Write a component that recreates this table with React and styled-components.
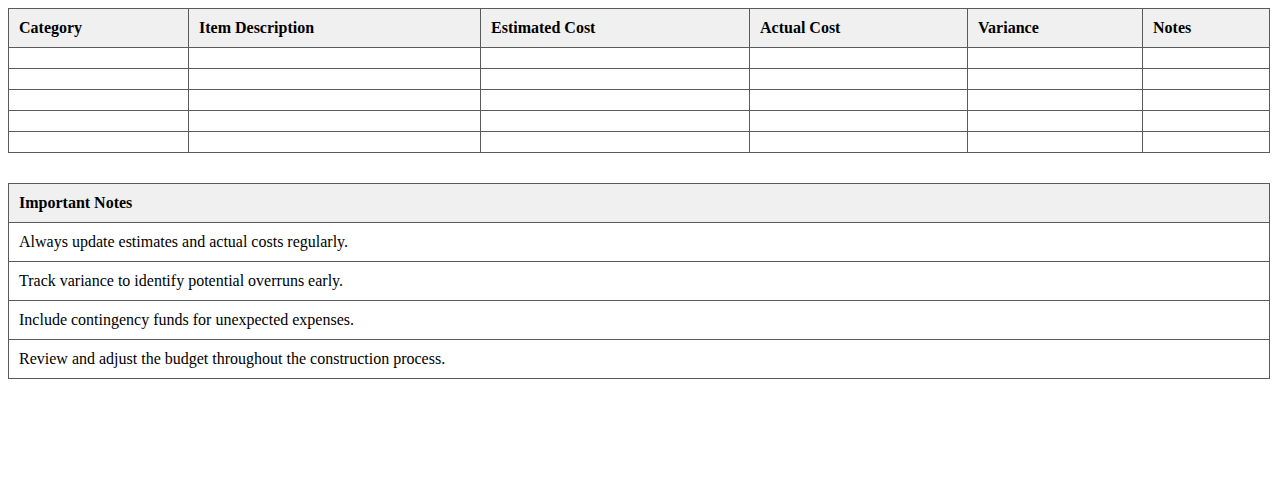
import * as React from "react"
import styled, { createGlobalStyle } from "styled-components"

const GlobalStyle = createGlobalStyle`
  body {
    margin: 8px;
    font-family: "Liberation Serif", "Times New Roman", serif;
    font-size: 16px;
    color: #000;
    background: #fff;
  }
`;

const Table = styled.table`
  width: 100%;
  border-collapse: collapse;
  table-layout: fixed;
  margin-bottom: ${(p) => p.$gap || 0}px;
`;

const Th = styled.th`
  background-color: #f0f0f0;
  border: 1px solid #5a5a5a;
  padding: 10px;
  text-align: left;
  font-weight: bold;
`;

const Td = styled.td`
  border: 1px solid #5a5a5a;
  padding: 10px;
  text-align: left;
`;

const columns = [
  { label: "Category", width: 180 },
  { label: "Item Description", width: 292 },
  { label: "Estimated Cost", width: 269 },
  { label: "Actual Cost", width: 218 },
  { label: "Variance", width: 175 },
  { label: "Notes" },
];

const notes = [
  "Always update estimates and actual costs regularly.",
  "Track variance to identify potential overruns early.",
  "Include contingency funds for unexpected expenses.",
  "Review and adjust the budget throughout the construction process.",
];

const App = () => {
  return (
    <>
      <GlobalStyle />
      <Table $gap={30}>
        <colgroup>
          {columns.map((c) => (
            <col key={c.label} style={c.width ? { width: c.width } : undefined} />
          ))}
        </colgroup>
        <thead>
          <tr>
            {columns.map((c) => (
              <Th key={c.label}>{c.label}</Th>
            ))}
          </tr>
        </thead>
        <tbody>
          {[0, 1, 2, 3, 4].map((r) => (
            <tr key={r}>
              {columns.map((c) => (
                <Td key={c.label}></Td>
              ))}
            </tr>
          ))}
        </tbody>
      </Table>

      <Table>
        <thead>
          <tr>
            <Th>Important Notes</Th>
          </tr>
        </thead>
        <tbody>
          {notes.map((n) => (
            <tr key={n}>
              <Td>{n}</Td>
            </tr>
          ))}
        </tbody>
      </Table>
    </>
  )
}

export default App
